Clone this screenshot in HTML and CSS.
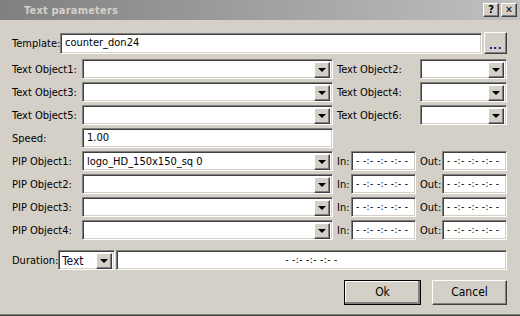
FILE: index.html
```html
<!DOCTYPE html>
<html lang="en">
<head>
    <meta charset="UTF-8">
    <title>Text parameters</title>
    <link rel="stylesheet" href="styles.css">
</head>
<body>
<div class="dialog">
    <div class="titlebar">
        <span class="title">Text parameters</span>
        <span class="tbtn">?</span>
        <span class="tbtn close">&#x2715;</span>
    </div>

    <div class="form">
        <div class="row first">
            <label class="lbl-tpl">Template:</label>
            <div class="field sunken tpl-input">counter_don24</div>
            <div class="raised dots">...</div>
        </div>

        <div class="row">
            <label class="lbl">Text Object1:</label>
            <div class="combo sunken main"><span class="val"></span><span class="arrow raised"></span></div>
            <label class="lbl2">Text Object2:</label>
            <div class="combo sunken small"><span class="val"></span><span class="arrow raised"></span></div>
        </div>
        <div class="row">
            <label class="lbl">Text Object3:</label>
            <div class="combo sunken main"><span class="val"></span><span class="arrow raised"></span></div>
            <label class="lbl2">Text Object4:</label>
            <div class="combo sunken small"><span class="val"></span><span class="arrow raised"></span></div>
        </div>
        <div class="row">
            <label class="lbl">Text Object5:</label>
            <div class="combo sunken main"><span class="val"></span><span class="arrow raised"></span></div>
            <label class="lbl2">Text Object6:</label>
            <div class="combo sunken small"><span class="val"></span><span class="arrow raised"></span></div>
        </div>

        <div class="row">
            <label class="lbl">Speed:</label>
            <div class="field sunken main">1.00</div>
        </div>

        <div class="row">
            <label class="lbl">PIP Object1:</label>
            <div class="combo sunken main"><span class="val">logo_HD_150x150_sq 0</span><span class="arrow raised"></span></div>
            <label class="lbl-in">In:</label>
            <div class="field sunken time">- -:- -:- -:- -</div>
            <label class="lbl-out">Out:</label>
            <div class="field sunken time">- -:- -:- -:- -</div>
        </div>
        <div class="row">
            <label class="lbl">PIP Object2:</label>
            <div class="combo sunken main"><span class="val"></span><span class="arrow raised"></span></div>
            <label class="lbl-in">In:</label>
            <div class="field sunken time">- -:- -:- -:- -</div>
            <label class="lbl-out">Out:</label>
            <div class="field sunken time">- -:- -:- -:- -</div>
        </div>
        <div class="row">
            <label class="lbl">PIP Object3:</label>
            <div class="combo sunken main"><span class="val"></span><span class="arrow raised"></span></div>
            <label class="lbl-in">In:</label>
            <div class="field sunken time">- -:- -:- -:- -</div>
            <label class="lbl-out">Out:</label>
            <div class="field sunken time">- -:- -:- -:- -</div>
        </div>
        <div class="row">
            <label class="lbl">PIP Object4:</label>
            <div class="combo sunken main"><span class="val"></span><span class="arrow raised"></span></div>
            <label class="lbl-in">In:</label>
            <div class="field sunken time">- -:- -:- -:- -</div>
            <label class="lbl-out">Out:</label>
            <div class="field sunken time">- -:- -:- -:- -</div>
        </div>

        <div class="row duration">
            <label class="lbl-dur">Duration:</label>
            <div class="combo sunken dur-type"><span class="val typed">Text</span><span class="arrow raised"></span></div>
            <div class="field sunken dur-value">- -:- -:- -:- -</div>
        </div>

        <div class="buttons">
            <div class="btn raised default">Ok</div>
            <div class="btn raised">Cancel</div>
        </div>
    </div>
</div>
</body>
</html>
```

FILE: styles.css
```css
html, body {
    margin: 0;
    padding: 0;
}
body {
    font-family: "DejaVu Sans Condensed", "DejaVu Sans", sans-serif;
    font-size: 11px;
    color: #000;
    background-color: #d4d0c8;
}
.dialog {
    width: 520px;
    height: 316px;
    box-sizing: border-box;
    background-color: #d4d0c8;
    border-bottom: 1px solid #404040;
    box-shadow: inset 0 -1px #808080;
}
.titlebar {
    height: 20px;
    display: flex;
    align-items: center;
    background: linear-gradient(to right, #808080, #c0c0c0);
    padding: 0 3px 0 24px;
}
.title {
    flex: 1;
    font-weight: bold;
    color: #d4d0c8;
    font-size: 11px;
    letter-spacing: 0.2px;
}
.tbtn {
    width: 16px;
    height: 14px;
    margin-left: 2px;
    box-sizing: border-box;
    background-color: #d4d0c8;
    border: 1px solid;
    border-color: #fff #404040 #404040 #fff;
    box-shadow: inset -1px -1px #808080;
    font-weight: bold;
    font-size: 11px;
    line-height: 12px;
    text-align: center;
}
.close {
    font-size: 10px;
}

.sunken {
    box-sizing: border-box;
    background-color: #fff;
    border: 1px solid;
    border-color: #808080 #fff #fff #808080;
    box-shadow: inset 1px 1px #404040, inset -1px -1px #d4d0c8;
}
.raised {
    box-sizing: border-box;
    background-color: #d4d0c8;
    border: 1px solid;
    border-color: #fff #404040 #404040 #fff;
    box-shadow: inset -1px -1px #808080;
}

.form {
    padding: 13px 13px 0 12px;
    display: flex;
    flex-direction: column;
    gap: 3px;
}
.row {
    display: flex;
    align-items: center;
    height: 20px;
}
.row.first {
    height: 21px;
    margin-bottom: 2px;
}
.row.first .tpl-input {
    height: 21px;
}
label {
    white-space: nowrap;
}
.lbl {
    width: 70px;
}
.lbl-tpl {
    width: 48px;
}
.lbl2 {
    width: 83px;
    padding-left: 4px;
}
.lbl-in {
    width: 14px;
    padding-left: 4px;
}
.lbl-out {
    width: 22px;
    padding-left: 4px;
}
.lbl-dur {
    width: 46px;
}

.field {
    height: 20px;
    line-height: 18px;
    padding-left: 4px;
    white-space: nowrap;
    overflow: hidden;
}
.tpl-input {
    width: 422px;
}
.dots {
    width: 23px;
    height: 22px;
    margin-left: 2px;
    margin-top: -2px;
    text-align: center;
    line-height: 26px;
    color: #000080;
    font-weight: bold;
    letter-spacing: 0.5px;
}
.main {
    width: 251px;
}
.combo {
    height: 20px;
    display: flex;
    padding: 2px;
}
.combo .val {
    flex: 1;
    line-height: 16px;
    padding-left: 2px;
    white-space: nowrap;
}
.combo .typed {
    color: #0a0a40;
    font-size: 12px;
}
.arrow {
    width: 16px;
    height: 16px;
    position: relative;
}
.arrow::after {
    content: "";
    position: absolute;
    left: 3px;
    top: 5px;
    border-left: 4px solid transparent;
    border-right: 4px solid transparent;
    border-top: 4px solid #000;
}
.small {
    width: 87px;
}
.time {
    width: 65px;
    padding-left: 4px;
    font-size: 10px;
    letter-spacing: 0.4px;
}

.duration {
    margin-top: 7px;
}
.dur-type {
    width: 57px;
    padding-left: 1px;
}
.dur-value {
    width: 392px;
    margin-left: 1px;
    text-align: center;
    font-size: 10px;
    letter-spacing: 0.4px;
    padding-left: 0;
}

.buttons {
    display: flex;
    justify-content: flex-end;
    gap: 11px;
    margin-top: 7px;
}
.btn {
    height: 25px;
    width: 75px;
    line-height: 23px;
    text-align: center;
    font-size: 12px;
}
.btn.default {
    width: 77px;
    outline: 1px solid #000;
    outline-offset: -1px;
    border-color: #fff #404040 #404040 #fff;
    box-shadow: inset -2px -2px #808080, inset 1px 1px #fff;
}
```
